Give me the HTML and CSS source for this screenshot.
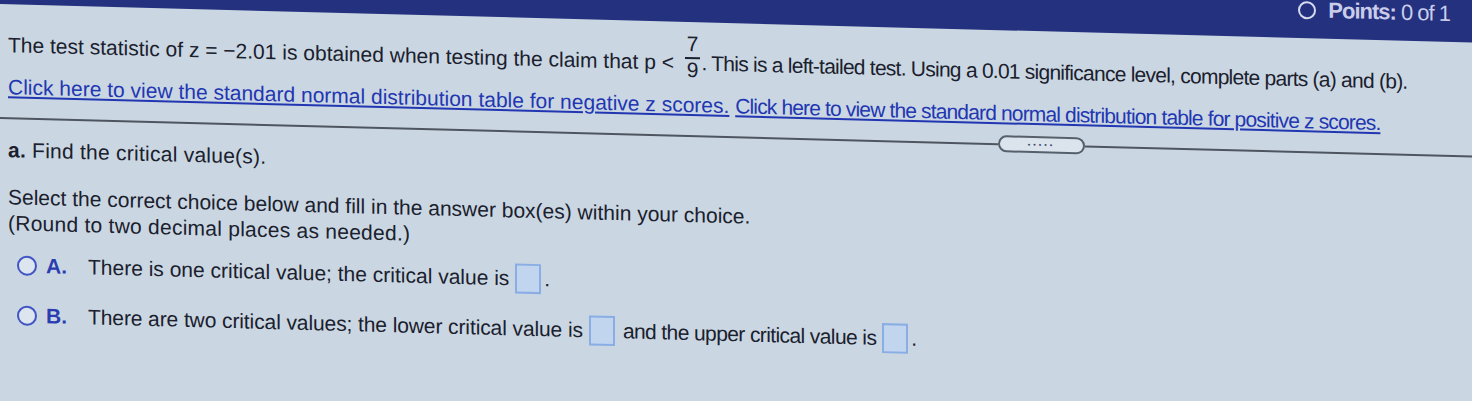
FILE: index.html
```html
<!DOCTYPE html>
<html lang="en">
<head>
    <meta charset="UTF-8">
    <meta name="viewport" content="width=device-width, initial-scale=1.0">
    <title>Hypothesis Test - Critical Values</title>
    <link rel="stylesheet" href="styles.css">
</head>
<body>
    <div class="screen">
        <div class="topbar">
            <div class="points"><span class="ring"></span><strong>Points:</strong>&nbsp;0 of 1</div>
        </div>

        <div class="question">
            <p class="stem">The test statistic of z = &minus;2.01 is obtained when testing the claim that p &lt; <span class="frac"><span class="num">7</span><span class="den">9</span></span><span class="far">. This is a left-tailed test. Using a 0.01 significance level, complete parts (a) and (b).</span></p>
            <p class="links"><a href="#">Click here to view the standard normal distribution table for negative z scores.</a> <a href="#" class="far">Click here to view the standard normal distribution table for positive z scores.</a></p>
        </div>

        <div class="divider">
            <span class="rule"></span>
            <button class="more">&bull;&bull;&bull;&bull;&bull;</button>
            <span class="rule"></span>
        </div>

        <div class="part">
            <p class="part-title"><b>a.</b> Find the critical value(s).</p>
            <p class="instructions">Select the correct choice below and fill in the answer box(es) within your choice.<br><span class="near">(Round to two decimal places as needed.)</span></p>

            <div class="choice choice-a">
                <span class="radio"></span>
                <span class="letter">A.</span>
                <span class="choice-text">There is one critical value; the critical value is<span class="answer-box"></span>.</span>
            </div>
            <div class="choice choice-b">
                <span class="radio"></span>
                <span class="letter">B.</span>
                <span class="choice-text"><span class="tight">There are two critical values; the lower critical value is</span><span class="answer-box"></span><span class="mid">and the upper critical value is</span><span class="answer-box last"></span>.</span>
            </div>
        </div>
    </div>
</body>
</html>
```

FILE: styles.css
```css
html {
    overflow: hidden;
}

body {
    margin: 0;
    min-height: 100vh;
    background-color: #cad7e2;
    font-family: "Liberation Sans", Arial, sans-serif;
    font-size: 21px;
    color: #1a202d;
}

p {
    margin: 0;
}

/* the photo is taken at a slight angle */
.screen {
    transform: translateY(-46px) skewY(1.5deg);
    transform-origin: 0 0;
}

/* text on the right of the photo looks narrower */
.near {
    letter-spacing: 0.25px;
}

.tight {
    letter-spacing: -0.1px;
}

.mid {
    letter-spacing: -0.6px;
}

.far {
    letter-spacing: -0.75px;
}

.links .far {
    letter-spacing: -0.85px;
}

.topbar {
    height: 50px;
    background-color: #24317f;
    display: flex;
    justify-content: flex-end;
    padding: 0 22px 0 0;
    box-sizing: border-box;
}

.points {
    display: flex;
    align-items: center;
    margin-top: -6px;
    color: #c9cdea;
    font-size: 22px;
    line-height: 24px;
    letter-spacing: -1px;
}

.ring {
    width: 14px;
    height: 14px;
    border: 2px solid #d6daf0;
    border-radius: 50%;
    margin-right: 12px;
}

.question {
    padding: 13px 0 0 8px;
}

.stem {
    line-height: 24px;
    white-space: nowrap;
}

.frac {
    display: inline-flex;
    flex-direction: column;
    align-items: center;
    vertical-align: 19px;
    margin: 0 1px 0 5px;
}

.num {
    line-height: 18px;
    padding: 0 2px 4px;
}

.den {
    line-height: 18px;
    border-top: 2px solid #1a202d;
    padding: 2px 2px 0;
}

.links {
    margin-top: 14px;
    line-height: 24px;
    white-space: nowrap;
}

.links a {
    color: #2236b2;
    text-decoration: underline;
}

.divider {
    display: grid;
    grid-template-columns: 998px 87px 1fr;
    align-items: center;
    margin-top: 10px;
}

.rule {
    height: 2px;
    background-color: #4d5560;
}

.more {
    height: 17px;
    padding: 0;
    border: 2px solid #56606c;
    border-radius: 9px;
    background-color: #dbe4ec;
    color: #39466a;
    font-size: 7px;
    letter-spacing: 3px;
    line-height: 11px;
}

.part {
    padding: 12px 0 0 8px;
}

.part-title {
    line-height: 24px;
    letter-spacing: 0.25px;
}

.instructions {
    margin-top: 22px;
    line-height: 26px;
}

.choice {
    display: flex;
    align-items: center;
    height: 34px;
    padding-left: 9px;
}

.choice-a {
    margin-top: 12px;
}

.choice-b {
    margin-top: 16px;
}

.radio {
    width: 16px;
    height: 16px;
    border: 2px solid #4054c4;
    border-radius: 50%;
    background-color: #dde6ef;
    margin-right: 9px;
}

.letter {
    width: 42px;
    font-weight: bold;
    color: #2a3db0;
}

.choice-text {
    display: flex;
    align-items: center;
    white-space: pre;
}

.answer-box {
    display: inline-block;
    width: 22px;
    height: 26px;
    border: 2px solid #8aaee4;
    background-color: #c2d5ef;
    margin: 0 3px 0 6px;
}

.choice-b .answer-box {
    margin: 0 8px 0 6px;
}

.choice-b .answer-box.last {
    margin-right: 3px;
}
```
